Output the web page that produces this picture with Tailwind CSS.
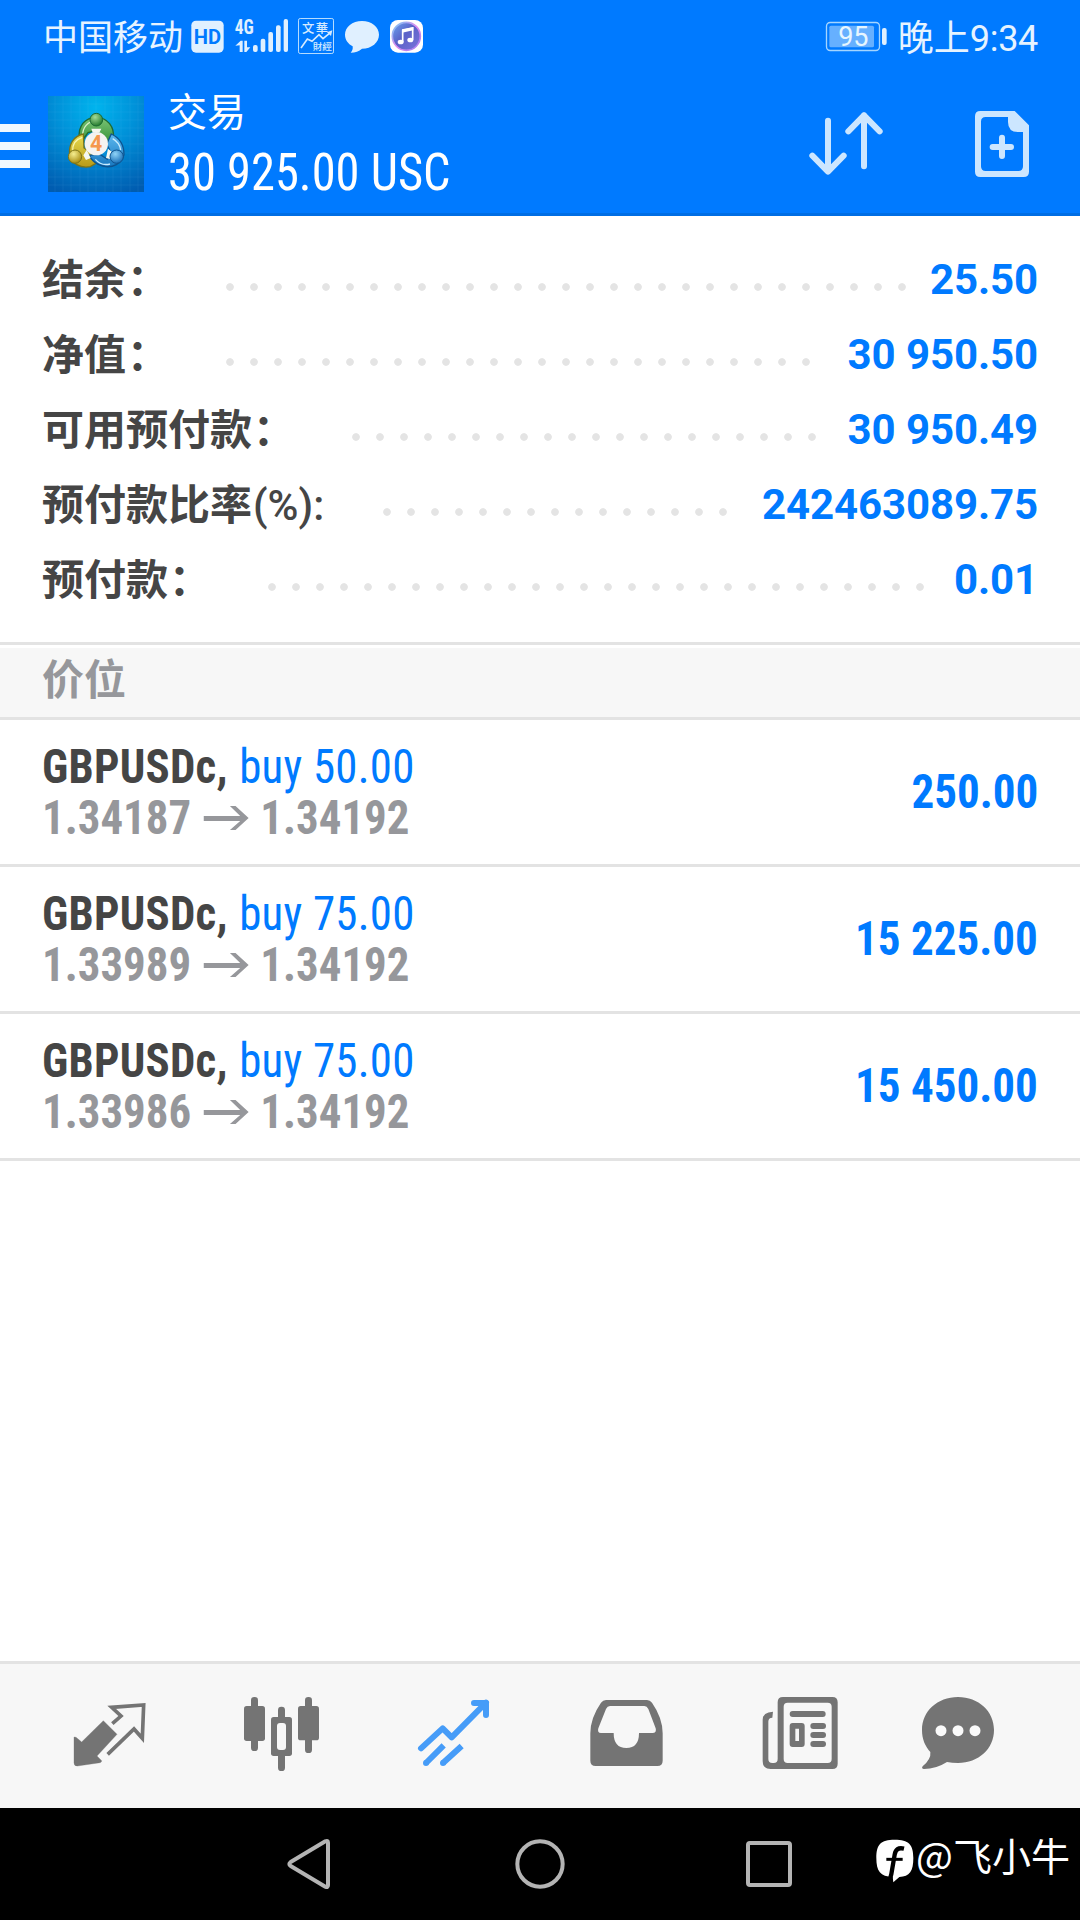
<!DOCTYPE html>
<html lang="zh-CN">
<head>
    <meta charset="UTF-8">
    <meta name="viewport" content="width=device-width, initial-scale=1.0">
    <title>交易</title>
    <script src="https://cdn.jsdelivr.net/npm/@tailwindcss/browser@4"></script>
</head>
<body class="w-[1080px] h-[1920px] bg-white flex flex-col overflow-hidden font-[Roboto,'Noto_Sans_CJK_SC',sans-serif]">
    <!-- 顶部 -->
    <header class="h-[216px] shrink-0 bg-[#007aff] border-b-[3px] border-[#006ee4] text-[#e6f3ff]">
        <!-- 状态栏 -->
        <div class="h-[72px] flex items-center pl-[43px] pr-[42px] text-[35px] leading-none">
            <span class="w-[148px] pt-[5px] whitespace-nowrap">中国移动</span>
            <svg class="w-[33px] h-[38px]" viewBox="573 51 99 114">
                <rect x="574" y="62" width="97" height="96" rx="14" fill="#e0f0ff"/>
                <text x="622" y="131" text-anchor="middle" font-family="Roboto" font-weight="700" font-size="62" textLength="82" lengthAdjust="spacingAndGlyphs" fill="#007aff">HD</text>
            </svg>
            <svg class="w-[55px] h-[38px] ml-[10px] overflow-visible" viewBox="702 51 165 114" fill="#e0f0ff">
                <text x="704" y="101" font-family="Roboto Condensed" font-weight="700" font-size="60" textLength="57" lengthAdjust="spacingAndGlyphs">4G</text>
                <path d="M706 137l16-15h6v34h-9v-20zM733 122h8v20h10l-12 14h-6z"/>
                <rect x="759" y="135" width="14" height="21" rx="6"/>
                <rect x="782" y="116" width="14" height="40" rx="6"/>
                <rect x="805" y="96" width="14" height="60" rx="6"/>
                <rect x="828" y="76" width="14" height="80" rx="6"/>
                <rect x="851" y="57" width="13" height="99" rx="6"/>
            </svg>
            <svg class="w-[38px] h-[38px] ml-[8px]" viewBox="891 51 114 114" fill="#d5eaff">
                <rect x="895.5" y="55.5" width="105" height="105" rx="5" fill="none" stroke="#b5dcff" stroke-width="3"/>
                <text x="906" y="99" font-family="Noto Sans CJK TC" font-weight="500" font-size="37" textLength="78">文華</text>
                <text x="938" y="149" font-family="Noto Sans CJK TC" font-weight="500" font-size="29" textLength="58">財經</text>
                <path d="M903 144l19-27 14 7 21-20 12 12 23-19" fill="none" stroke="#d5eaff" stroke-width="5"/>
                <path d="M981 97l16-6-4 17z"/>
            </svg>
            <svg class="w-[36px] h-[38px] ml-[9px]" viewBox="1032 51 108 114" fill="#e0f0ff">
                <path d="M1086 63c29 0 51 18 51 41s-22 42-51 42c-9 8-20 12-34 12 5-5 7-11 6-19-14-8-23-20-23-35 0-23 22-41 51-41z"/>
            </svg>
            <svg class="w-[35px] h-[38px] ml-[9px]" viewBox="1167 51 105 114">
                <defs>
                    <linearGradient id="music" x1="0" y1="0" x2="1" y2="1">
                        <stop offset="0" stop-color="#6aa5f0"/><stop offset=".45" stop-color="#5a62c8"/><stop offset="1" stop-color="#7c74dc"/>
                    </linearGradient>
                    <linearGradient id="ring" x1="0" y1="0" x2="1" y2="1">
                        <stop offset="0" stop-color="#6cc8f5"/><stop offset=".5" stop-color="#e08cf0"/><stop offset="1" stop-color="#9a7cf0"/>
                    </linearGradient>
                </defs>
                <rect x="1170" y="60" width="99" height="98" rx="24" fill="#fff"/>
                <circle cx="1219" cy="109" r="42" fill="url(#music)" stroke="url(#ring)" stroke-width="5"/>
                <path d="M1208 125V91l30-7v35" fill="none" stroke="#fff" stroke-width="5"/>
                <path d="M1206 88l34-7v10l-34 7z" fill="#fff"/>
                <ellipse cx="1202" cy="126" rx="9" ry="7" fill="#fff"/>
                <ellipse cx="1231" cy="120" rx="9" ry="7" fill="#fff"/>
            </svg>
            <svg class="w-[63px] h-[38px] ml-auto" viewBox="135 51 189 114">
                <rect x="139.5" y="67.5" width="159" height="84" rx="11" fill="none" stroke="#a5d5ff" stroke-width="4"/>
                <rect x="148" y="77" width="134" height="65" rx="5" fill="#66b0ff"/>
                <rect x="306" y="84" width="14" height="51" rx="6" fill="#e0f0ff"/>
                <text x="220" y="138" text-anchor="middle" font-family="Roboto" font-size="81" fill="#e6f6ff">95</text>
            </svg>
            <span class="ml-[10px] pt-[5px] text-[36px] whitespace-nowrap">晚上<span class="tracking-[-0.3px]">9:34</span></span>
        </div>
        <!-- 标题栏 -->
        <div class="flex items-start">
            <div class="w-[30px] mt-[52px] flex flex-col gap-[10px]">
                <div class="h-[8px] bg-[#f0f8ff]"></div>
                <div class="h-[8px] bg-[#f0f8ff]"></div>
                <div class="h-[8px] bg-[#f0f8ff]"></div>
            </div>
            <svg class="w-[96px] h-[96px] mt-[24px] ml-[18px]" viewBox="144 288 288 288">
                <defs>
                    <radialGradient id="sky" cx=".5" cy=".12" r=".95">
                        <stop offset="0" stop-color="#00b4ee"/><stop offset=".45" stop-color="#0090d8"/><stop offset="1" stop-color="#005cb0"/>
                    </radialGradient>
                    <linearGradient id="green" x1="0" y1="0" x2="0" y2="1"><stop offset="0" stop-color="#7cc576"/><stop offset="1" stop-color="#2c8a30"/></linearGradient>
                    <linearGradient id="gold" x1="0" y1="0" x2="0" y2="1"><stop offset="0" stop-color="#e8dc50"/><stop offset="1" stop-color="#b89a18"/></linearGradient>
                    <linearGradient id="azure" x1="0" y1="0" x2="0" y2="1"><stop offset="0" stop-color="#5cb8ee"/><stop offset="1" stop-color="#1878c0"/></linearGradient>
                    <radialGradient id="ballGreen" cx=".4" cy=".3" r=".7"><stop offset="0" stop-color="#a5dc98"/><stop offset="1" stop-color="#227a2c"/></radialGradient>
                    <radialGradient id="ballGold" cx=".4" cy=".3" r=".7"><stop offset="0" stop-color="#f5ee90"/><stop offset="1" stop-color="#a88c10"/></radialGradient>
                    <radialGradient id="ballBlue" cx=".4" cy=".3" r=".7"><stop offset="0" stop-color="#90d4f8"/><stop offset="1" stop-color="#1a70b8"/></radialGradient>
                </defs>
                <rect x="144" y="288" width="288" height="288" fill="url(#sky)"/>
                <path d="M165 288v288M189 288v288M213 288v288M240 288v288M264 288v288M288 288v288M315 288v288M339 288v288M363 288v288M390 288v288M414 288v288M144 312h288M144 336h288M144 360h288M144 384h288M144 408h288M144 432h288M144 459h288M144 483h288M144 507h288M144 531h288M144 555h288" stroke="#7fdcff" stroke-opacity=".12" stroke-width="2"/>
                <!-- 三个相扣的小人 -->
                <path d="M238 414c-4-36 17-62 51-62s55 30 51 62l-6 26-22-24-23-24-25 6-16 22z" fill="url(#green)" stroke="#1d6a34" stroke-width="4"/>
                <path d="M248 408c-1-26 15-44 40-46" fill="none" stroke="#d8f0c8" stroke-width="4"/>
                <path d="M250 402c-30 6-44 32-41 60 4 28 32 44 62 38l17-10-14-14 2-16-24-16z" fill="url(#gold)" stroke="#7c7418" stroke-width="4"/>
                <path d="M247 412c-20 6-30 22-29 42" fill="none" stroke="#faf6b0" stroke-width="4"/>
                <path d="M334 402c26 12 38 36 38 62-6 26-34 42-64 34-22-6-34-16-40-32l30-4 24 16 10-22-12-24z" fill="url(#azure)" stroke="#0e5490" stroke-width="4"/>
                <path d="M338 416c14 8 22 18 24 34M286 478c12 14 28 18 44 14" fill="none" stroke="#c8ecff" stroke-width="4"/>
                <path d="M274 386h30l-6 12h-20zM250 466l10-16 12 24-14 6zM318 474l6-28 12 10-4 22z" fill="#f5f8f0"/>
                <circle cx="289" cy="359" r="19" fill="url(#ballGreen)" stroke="#1d6a34" stroke-width="3"/>
                <circle cx="225" cy="470" r="20" fill="url(#ballGold)" stroke="#7c7418" stroke-width="3"/>
                <circle cx="350" cy="470" r="20" fill="url(#ballBlue)" stroke="#0e5490" stroke-width="3"/>
                <circle cx="289" cy="431" r="35" fill="#f5f3f1"/>
                <text x="288" y="454" text-anchor="middle" font-family="Roboto" font-weight="700" font-size="64" fill="#f5984e">4</text>
            </svg>
            <div class="mt-[14px] ml-[24px] text-white">
                <div class="text-[39px] leading-[55px]">交易</div>
                <div class="font-['Roboto_Condensed',Roboto,sans-serif] text-[51px] leading-[63px] origin-left scale-x-[.951] whitespace-nowrap">30 925.00 USC</div>
            </div>
            <div class="ml-auto mt-[38px] mr-[50px] flex">
                <svg class="w-[80px] h-[66px]" viewBox="78 330 240 198" fill="none" stroke="#cce6ff" stroke-width="18" stroke-linecap="round" stroke-linejoin="round">
                    <path d="M144 362v152M97 467l47 48 47-48"/>
                    <path d="M252 499V346M205 394l47-48 47 48"/>
                </svg>
                <svg class="w-[56px] h-[68px] ml-[88px]" viewBox="582 330 168 204">
                    <path fill="#cce6ff" fill-rule="evenodd" d="M601 333h103l43 43v139q0 16-16 16H601q-16 0-16-16V349q0-16 16-16zM617 351q-14 0-14 14v134q0 14 14 14h98q14 0 14-14V396h-15q-30 0-30-30v-15z"/>
                    <path d="M666 413v55M638 441h55" stroke="#cce6ff" stroke-width="18" stroke-linecap="round"/>
                </svg>
            </div>
        </div>
    </header>

    <!-- 账户概要 -->
    <section class="h-[429px] shrink-0 pt-[26px] pl-[42px] pr-[42px] border-b-[3px] border-[#e3e3e3] text-[42px] font-bold">
        <div class="h-[75px] flex items-center">
            <span class="w-[127px] pt-[2px] text-[#454545] whitespace-nowrap">结余<span class="ml-[1px]">：</span></span>
            <div class="w-[696px] h-[24px] mt-[15px] ml-[49px] bg-[radial-gradient(circle,#e4e4e4_3.4px,transparent_4.2px)] bg-[length:24px_24px]"></div>
            <span class="ml-auto text-[#007aff] tracking-[-0.1px]">25.50</span>
        </div>
        <div class="h-[75px] flex items-center">
            <span class="w-[127px] pt-[2px] text-[#454545] whitespace-nowrap">净值<span class="ml-[1px]">：</span></span>
            <div class="w-[600px] h-[24px] mt-[15px] ml-[49px] bg-[radial-gradient(circle,#e4e4e4_3.4px,transparent_4.2px)] bg-[length:24px_24px]"></div>
            <span class="ml-auto text-[#007aff] tracking-[-0.1px]">30 950.50</span>
        </div>
        <div class="h-[75px] flex items-center">
            <span class="w-[253px] pt-[2px] text-[#454545] whitespace-nowrap">可用预付款<span class="ml-[1px]">：</span></span>
            <div class="w-[480px] h-[24px] mt-[15px] ml-[49px] bg-[radial-gradient(circle,#e4e4e4_3.4px,transparent_4.2px)] bg-[length:24px_24px]"></div>
            <span class="ml-auto text-[#007aff] tracking-[-0.1px]">30 950.49</span>
        </div>
        <div class="h-[75px] flex items-center">
            <span class="w-[284px] pt-[2px] text-[#454545] whitespace-nowrap">预付款比率<span class="ml-[1px] font-medium">(%):</span></span>
            <div class="w-[360px] h-[24px] mt-[15px] ml-[49px] bg-[radial-gradient(circle,#e4e4e4_3.4px,transparent_4.2px)] bg-[length:24px_24px]"></div>
            <span class="ml-auto text-[#007aff] tracking-[-0.1px]">242463089.75</span>
        </div>
        <div class="h-[75px] flex items-center">
            <span class="w-[169px] pt-[2px] text-[#454545] whitespace-nowrap">预付款<span class="ml-[1px]">：</span></span>
            <div class="w-[672px] h-[24px] mt-[15px] ml-[49px] bg-[radial-gradient(circle,#e4e4e4_3.4px,transparent_4.2px)] bg-[length:24px_24px]"></div>
            <span class="ml-auto text-[#007aff] tracking-[-0.1px]">0.01</span>
        </div>
    </section>

    <!-- 持仓列表 -->
    <div class="h-[72px] shrink-0 mt-[3px] pl-[42px] bg-[#f7f7f7] border-b-[3px] border-[#e3e3e3] text-[#96979b] text-[42px] leading-[65px] font-bold">价位</div>
    <main class="grow font-['Roboto_Condensed',Roboto,sans-serif] text-[48px] leading-[51px] font-bold">
        <div class="h-[147px] pl-[42px] pr-[42px] border-b-[3px] border-[#e3e3e3] flex items-center justify-between">
            <div class="origin-left scale-x-[.935] whitespace-nowrap">
                <div class="text-[#454545] tracking-[0.25px]">GBPUSDc, <span class="ml-[1px] font-normal text-[#007aff]">buy 50.00</span></div>
                <div class="flex items-center text-[#96979b]">1.34187
                    <svg class="w-[50px] h-[28px] mx-[12px]" viewBox="0 0 50 28" fill="#96979b"><path d="M1 12h39L29 2h6l14 12-14 12h-6l11-9H1z"/></svg>
                    1.34192</div>
            </div>
            <div class="pb-[2px] origin-right scale-x-[.938] text-[#007aff]">250.00</div>
        </div>
        <div class="h-[147px] pl-[42px] pr-[42px] border-b-[3px] border-[#e3e3e3] flex items-center justify-between">
            <div class="origin-left scale-x-[.935] whitespace-nowrap">
                <div class="text-[#454545] tracking-[0.25px]">GBPUSDc, <span class="ml-[1px] font-normal text-[#007aff]">buy 75.00</span></div>
                <div class="flex items-center text-[#96979b]">1.33989
                    <svg class="w-[50px] h-[28px] mx-[12px]" viewBox="0 0 50 28" fill="#96979b"><path d="M1 12h39L29 2h6l14 12-14 12h-6l11-9H1z"/></svg>
                    1.34192</div>
            </div>
            <div class="pb-[2px] origin-right scale-x-[.938] text-[#007aff]">15 225.00</div>
        </div>
        <div class="h-[147px] pl-[42px] pr-[42px] border-b-[3px] border-[#e3e3e3] flex items-center justify-between">
            <div class="origin-left scale-x-[.935] whitespace-nowrap">
                <div class="text-[#454545] tracking-[0.25px]">GBPUSDc, <span class="ml-[1px] font-normal text-[#007aff]">buy 75.00</span></div>
                <div class="flex items-center text-[#96979b]">1.33986
                    <svg class="w-[50px] h-[28px] mx-[12px]" viewBox="0 0 50 28" fill="#96979b"><path d="M1 12h39L29 2h6l14 12-14 12h-6l11-9H1z"/></svg>
                    1.34192</div>
            </div>
            <div class="pb-[2px] origin-right scale-x-[.938] text-[#007aff]">15 450.00</div>
        </div>
    </main>

    <!-- 底部标签栏 -->
    <nav class="h-[147px] shrink-0 pt-[29px] pl-[70px] flex gap-[90px] bg-[#f7f7f7] border-t-[3px] border-[#e3e3e3] text-[#747474]">
        <!-- 行情 -->
        <svg class="w-[80px] h-[80px]" viewBox="90 129 240 240">
            <path d="M190 212l41 41-60 65 14 14q0 5-5 6l-68 10q-10 0-10-10v-77l6 1 17 14z" fill="currentColor" stroke="currentColor" stroke-width="1" stroke-linejoin="round"/>
            <path d="M217 221l26-23-28-26 96-7-4 100-25-28-79 76" fill="none" stroke="currentColor" stroke-width="11"/>
        </svg>
        <!-- 图表 -->
        <svg class="w-[80px] h-[80px]" viewBox="600 129 240 240" fill="currentColor">
            <rect x="633" y="141" width="21" height="162" rx="10"/>
            <rect x="612" y="168" width="63" height="105" rx="8"/>
            <rect x="795" y="141" width="21" height="168" rx="10"/>
            <rect x="774" y="168" width="63" height="103" rx="8"/>
            <rect x="714" y="170" width="21" height="193" rx="10"/>
            <rect x="693" y="201" width="63" height="117" rx="8"/>
            <rect x="711" y="219" width="27" height="81" rx="9" fill="#f7f7f7"/>
        </svg>
        <!-- 交易 -->
        <svg class="w-[80px] h-[80px]" viewBox="1110 129 240 240" fill="none" stroke="#469cf8" stroke-width="18" stroke-linejoin="round">
            <path d="M1143 295l65-60 27 27 103-104" stroke-linecap="round"/>
            <path d="M1302 159h36v36" stroke-linecap="round"/>
            <path d="M1320 158h18v20z" fill="#469cf8" stroke-width="8"/>
            <path d="M1158 339l53-53M1209 339l56-51"/>
            <path d="M1158 339h.1M1209 339h.1" stroke-linecap="round"/>
        </svg>
        <!-- 历史 -->
        <svg class="w-[80px] h-[80px] overflow-visible" viewBox="60 129 240 240" fill="currentColor">
            <path fill-rule="evenodd" d="M138 150h123q9 0 15 8 32 46 32 92v82q0 16-16 16H107q-16 0-16-16v-82q0-46 32-92 6-8 15-8zM150 168q-8 0-12 9l-23 58q-4 14 8 14h38q0 45 38 45t38-45h40q14 0 10-14l-22-58q-4-9-12-9z"/>
        </svg>
        <!-- 新闻 -->
        <svg class="w-[80px] h-[80px] overflow-visible" viewBox="570 129 240 240" fill="currentColor">
            <path fill-rule="evenodd" d="M669 141h148q16 0 16 16v184q0 16-16 16H632q-24 0-24-24v-124q0-22 31-24l-2 18q-12 0-12 12v112q0 12 12 12h4q12 0 12-12V157q0-16 16-16zM683 158q-12 0-12 12v157q0 12 12 12h120q12 0 12-12V170q0-12-12-12z"/>
            <rect x="689" y="183" width="108" height="18" rx="9"/>
            <path fill-rule="evenodd" d="M698 219h27q9 0 9 9v54q0 9-9 9h-27q-9 0-9-9v-54q0-9 9-9zM706 236v37h11v-37z"/>
            <rect x="751" y="219" width="47" height="18" rx="9"/>
            <rect x="751" y="246" width="47" height="18" rx="9"/>
            <rect x="751" y="273" width="47" height="18" rx="9"/>
        </svg>
        <!-- 聊天 -->
        <svg class="w-[80px] h-[80px]" viewBox="1080 129 240 240" fill="currentColor">
            <path d="M1194 141c62 0 108 43 108 99s-46 99-108 99q-18 0-33-3-33 21-69 21-9-1-4-8 26-22 23-43c-16-18-25-39-25-66 0-56 46-99 108-99z"/>
            <circle cx="1143" cy="242" r="16.5" fill="#fafafa"/>
            <circle cx="1194" cy="242" r="16.5" fill="#fafafa"/>
            <circle cx="1245" cy="242" r="16.5" fill="#fafafa"/>
        </svg>
    </nav>

    <!-- 系统导航键 -->
    <footer class="h-[112px] shrink-0 bg-black flex items-start pt-[30px] pl-[286px]">
        <svg class="w-[46px] h-[52px]" viewBox="48 24 138 156" fill="none" stroke="#b4b4b4" stroke-width="12" stroke-linejoin="round">
            <path d="M166 34q8-4 8 4v128q0 8-8 4L62 108q-8-6 0-12z"/>
        </svg>
        <svg class="w-[52px] h-[52px] ml-[182px]" viewBox="732 24 156 156"><circle cx="810" cy="102" r="68" fill="none" stroke="#b4b4b4" stroke-width="12"/></svg>
        <svg class="w-[52px] h-[52px] ml-[176px]" viewBox="0 0 52 52"><rect x="6" y="5" width="42" height="42" rx="2" fill="none" stroke="#b4b4b4" stroke-width="4"/></svg>
        <svg class="w-[40px] h-[46px] ml-[81px]" viewBox="45 55 120 138">
            <path d="M104 60c42 0 56 14 56 55 0 39-11 56-42 57l-18 16-2-16c-37-1-49-18-49-57 0-41 13-55 55-55z" fill="#fff"/>
            <path d="M132 87c-17-4-25 2-28 18l-10 58-6 22" fill="none" stroke="#000" stroke-width="13"/>
            <path d="M79 119h49" stroke="#000" stroke-width="9"/>
        </svg>
        <span class="ml-[1px] text-white font-['Noto_Sans_CJK_SC',sans-serif] text-[39px] leading-[33px] whitespace-nowrap">@飞小牛</span>
    </footer>
</body>
</html>
